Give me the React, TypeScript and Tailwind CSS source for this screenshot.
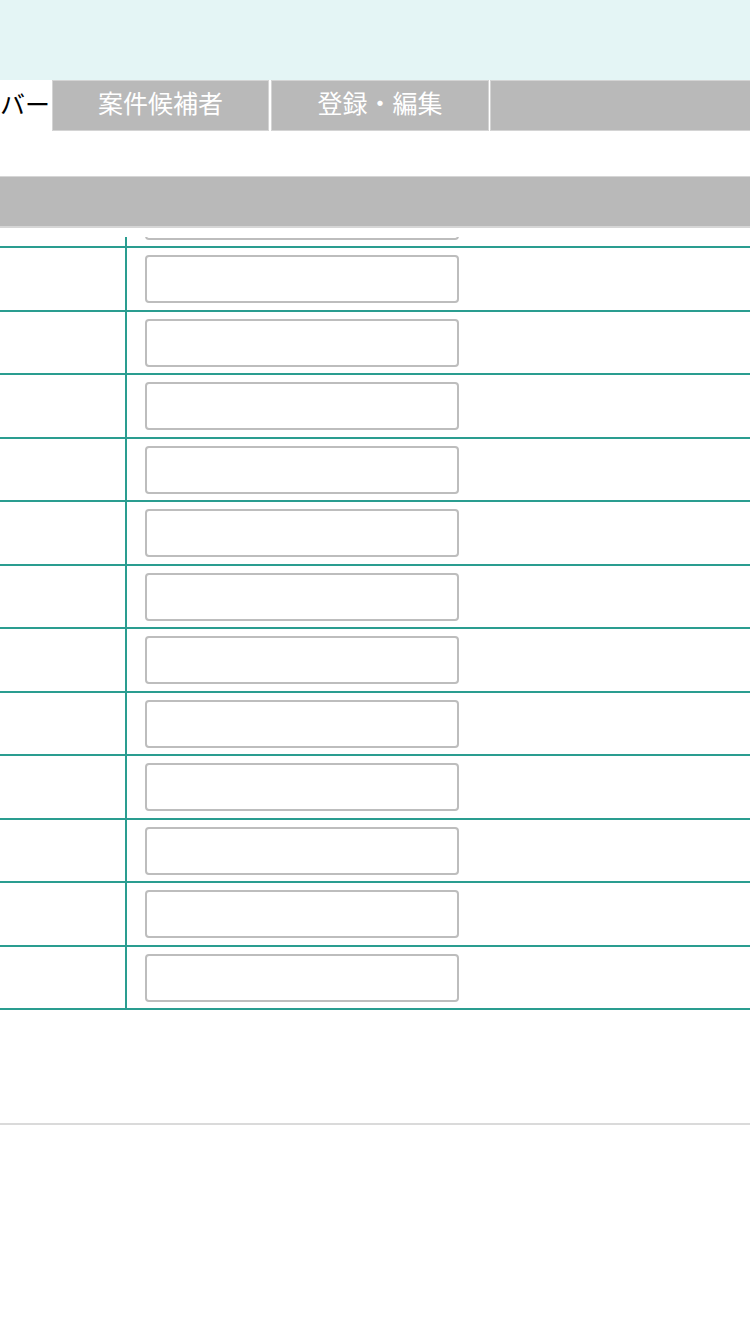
const rows = Array.from({ length: 12 }, (_, i) => i);

function Tab({ label, className }: { label: string; className: string }) {
  return (
    <div
      className={`flex h-full items-center justify-center border border-[#d4d4d4] bg-[#b9b9b9] pb-[5px] text-[25px] text-white ${className}`}
    >
      {label}
    </div>
  );
}

export default function App() {
  return (
    <main
      className="min-h-[1335px] w-[750px] overflow-hidden bg-white"
      style={{ fontFamily: '"Noto Sans CJK JP", "Noto Sans", sans-serif' }}
    >
      <header className="h-[80px] bg-[#e4f5f5]" />

      <nav className="flex h-[51px] items-stretch">
        <div className="flex w-[52px] shrink-0 items-center whitespace-nowrap pb-[5px] text-[25px] leading-none text-black">
          バー
        </div>
        <Tab label="案件候補者" className="w-[217px] shrink-0" />
        <Tab label="登録・編集" className="ml-[2px] w-[218px] shrink-0" />
        <Tab label="" className="ml-[1px] flex-1 border-r-0" />
      </nav>

      <div className="mt-[45px] h-[52px] border-t border-b-2 border-[#d6d6d6] bg-[#b9b9b9]" />

      <section className="mt-[9px]">
        <div className="flex h-[11px] border-b-2 border-[#2a9d90]">
          <div className="w-[125px] shrink-0" />
          <div className="flex-1 overflow-hidden border-l-2 border-[#2a9d90] pl-[18px]">
            <div className="-mt-[45px] h-[48px] w-[314px] rounded-[4px] border-2 border-[#bdbdbd] bg-white" />
          </div>
        </div>

        {rows.map((r) => (
          <div key={r} className="flex h-[63.5px] border-b-2 border-[#2a9d90]">
            <div className="w-[125px] shrink-0" />
            <div className="flex-1 border-l-2 border-[#2a9d90] pl-[18px] pt-[7px]">
              <input
                type="text"
                className="block h-[48px] w-[314px] rounded-[4px] border-2 border-[#bdbdbd] bg-white outline-none"
              />
            </div>
          </div>
        ))}
      </section>

      <div className="mt-[113px] border-t-2 border-[#dadada]" />
    </main>
  );
}
